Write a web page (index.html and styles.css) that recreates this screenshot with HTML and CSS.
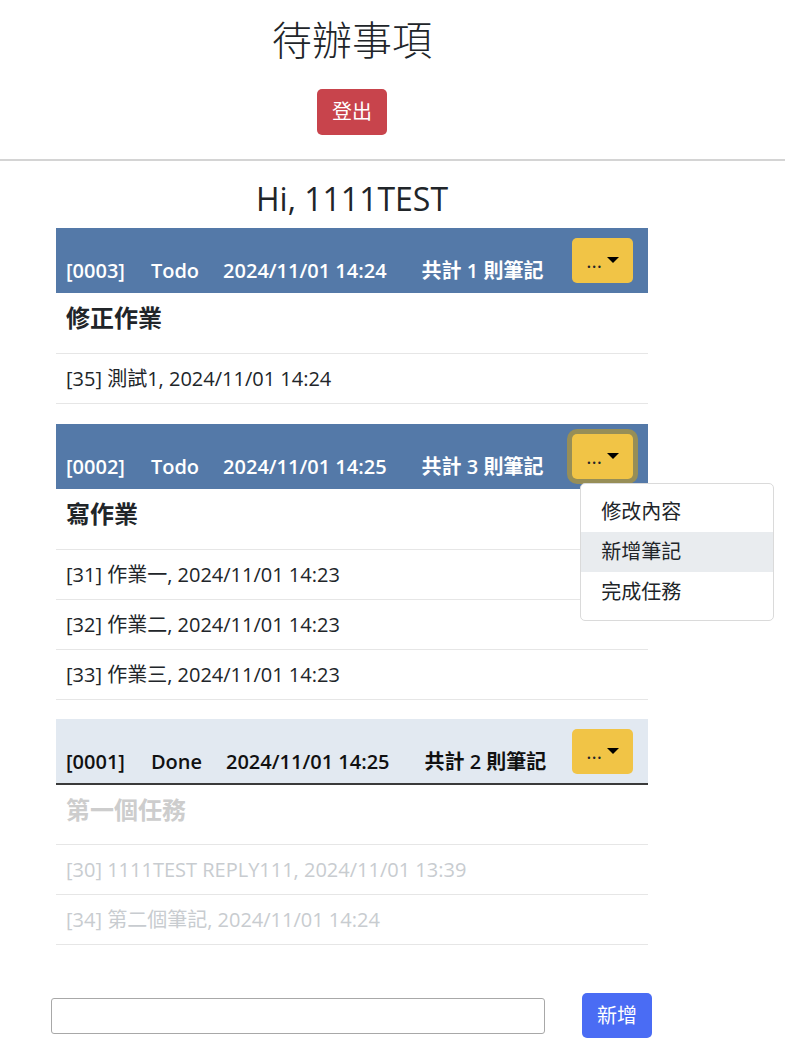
FILE: index.html
```html
<!DOCTYPE html>
<html lang="zh-Hant">
<head>
<meta charset="utf-8">
<title>待辦事項</title>
<link rel="stylesheet" href="styles.css">
</head>
<body>
<header class="top">
  <h1 class="title">待辦事項</h1>
  <button class="btn btn-logout" type="button">登出</button>
</header>
<hr class="divider">
<main class="page">
  <h2 class="greeting">Hi, 1111TEST</h2>

  <section class="card">
    <div class="card-head">
      <div class="meta"><span class="id">[0003]</span><span class="status">Todo</span><span class="date">2024/11/01 14:24</span><span class="count">共計 1 則筆記</span></div>
      <div class="dropdown"><button class="btn btn-more" type="button">...</button></div>
    </div>
    <div class="card-title">修正作業</div>
    <ul class="notes">
      <li>[35] 測試1, 2024/11/01 14:24</li>
    </ul>
  </section>

  <section class="card">
    <div class="card-head">
      <div class="meta"><span class="id">[0002]</span><span class="status">Todo</span><span class="date">2024/11/01 14:25</span><span class="count">共計 3 則筆記</span></div>
      <div class="dropdown">
        <button class="btn btn-more is-focused" type="button">...</button>
        <div class="menu">
          <div class="menu-item">修改內容</div>
          <div class="menu-item is-active">新增筆記</div>
          <div class="menu-item">完成任務</div>
        </div>
      </div>
    </div>
    <div class="card-title">寫作業</div>
    <ul class="notes">
      <li>[31] 作業一, 2024/11/01 14:23</li>
      <li>[32] 作業二, 2024/11/01 14:23</li>
      <li>[33] 作業三, 2024/11/01 14:23</li>
    </ul>
  </section>

  <section class="card card-done">
    <div class="card-head">
      <div class="meta"><span class="id">[0001]</span><span class="status">Done</span><span class="date">2024/11/01 14:25</span><span class="count">共計 2 則筆記</span></div>
      <div class="dropdown"><button class="btn btn-more" type="button">...</button></div>
    </div>
    <div class="card-title">第一個任務</div>
    <ul class="notes">
      <li>[30] 1111TEST REPLY111, 2024/11/01 13:39</li>
      <li>[34] 第二個筆記, 2024/11/01 14:24</li>
    </ul>
  </section>

  <form class="add-row" onsubmit="return false">
    <input class="add-input" type="text">
    <button class="btn btn-add" type="button">新增</button>
  </form>
</main>
</body>
</html>
```

FILE: styles.css
```css
* { box-sizing: border-box; }

body {
  margin: 0;
  font-family: "Open Sans", "Noto Sans CJK TC", sans-serif;
  font-size: 20px;
  line-height: 1.5;
  color: #212529;
  background: #fff;
}

.top {
  width: 704px;
  display: flex;
  flex-direction: column;
  align-items: center;
  padding-top: 16px;
}

.title {
  margin: 0;
  font-size: 40px;
  font-weight: 300;
  line-height: 48px;
  color: #212529;
}

.btn {
  border: none;
  font: inherit;
  line-height: 30px;
  padding: 7.5px 15px;
  border-radius: 5px;
  color: #fff;
  cursor: pointer;
}

.btn-logout {
  margin-top: 25px;
  padding: 8px 15px;
  background: #c8444c;
}

.divider {
  margin: 24px 0 0;
  border: 0;
  border-top: 2px solid #d4d4d4;
  height: 0;
}

.page {
  width: 704px;
}

.greeting {
  margin: 19px 0 10px;
  text-align: center;
  font-size: 32px;
  font-weight: 400;
  line-height: 38px;
}

.card {
  margin: 0 56px 20px;
}

.card-head {
  display: flex;
  justify-content: space-between;
  align-items: flex-end;
  padding: 10px 15px 10px 10px;
  background: #5479a8;
  color: #fff;
  font-weight: 600;
}

.meta {
  display: flex;
  white-space: nowrap;
  margin-bottom: -3px;
}

.meta .id { margin-right: 26px; }
.meta .status { margin-right: 24px; }
.meta .date { margin-right: 35px; }

.dropdown {
  position: relative;
}

.btn-more {
  display: block;
  padding: 7.5px 14px;
  background: #f1c446;
  color: #212529;
  font-weight: 400;
}

.btn-more::after {
  content: "";
  display: inline-block;
  margin-left: 5px;
  vertical-align: 5px;
  border-top: 6px solid #000;
  border-right: 6px solid transparent;
  border-left: 6px solid transparent;
}

.btn-more.is-focused {
  box-shadow: 0 0 0 5px rgba(217, 164, 6, 0.5);
}

.menu {
  position: absolute;
  top: calc(100% + 4px);
  left: 8px;
  width: 194px;
  padding: 8px 0;
  background: #fff;
  border: 1px solid #dadada;
  border-radius: 5px;
  color: #212529;
  font-weight: 400;
  z-index: 10;
}

.menu-item {
  padding: 5px 20px;
  line-height: 30px;
  white-space: nowrap;
}

.menu-item.is-active {
  background: #e9ecef;
}

.card-title {
  padding: 7px 10px 17px;
  font-size: 24px;
  font-weight: 700;
  line-height: 36px;
}

.notes {
  list-style: none;
  margin: 0;
  padding: 0;
  border-top: 1px solid #e6e6e6;
}

.notes li {
  padding: 10px 10px 9px;
  line-height: 30px;
  border-bottom: 1px solid #e6e6e6;
}

.card-done {
  margin-top: -1px;
}

.card-done .card-head {
  background: #e2e9f1;
  color: #111;
  padding-bottom: 9px;
  border-bottom: 2px solid #3a3a3a;
}

.card-done .card-title {
  color: #cdcdcd;
  padding-bottom: 16px;
}

.card-done .notes li {
  color: #c8ccd0;
}

.add-row {
  display: flex;
  align-items: center;
  margin: 48px 0 0 51px;
}

.add-input {
  width: 494px;
  height: 36px;
  border: 1px solid #a8a8a8;
  border-radius: 3px;
  font: inherit;
  padding: 0 8px;
}

.btn-add {
  margin-left: 37px;
  background: #4a6cf4;
}
```
